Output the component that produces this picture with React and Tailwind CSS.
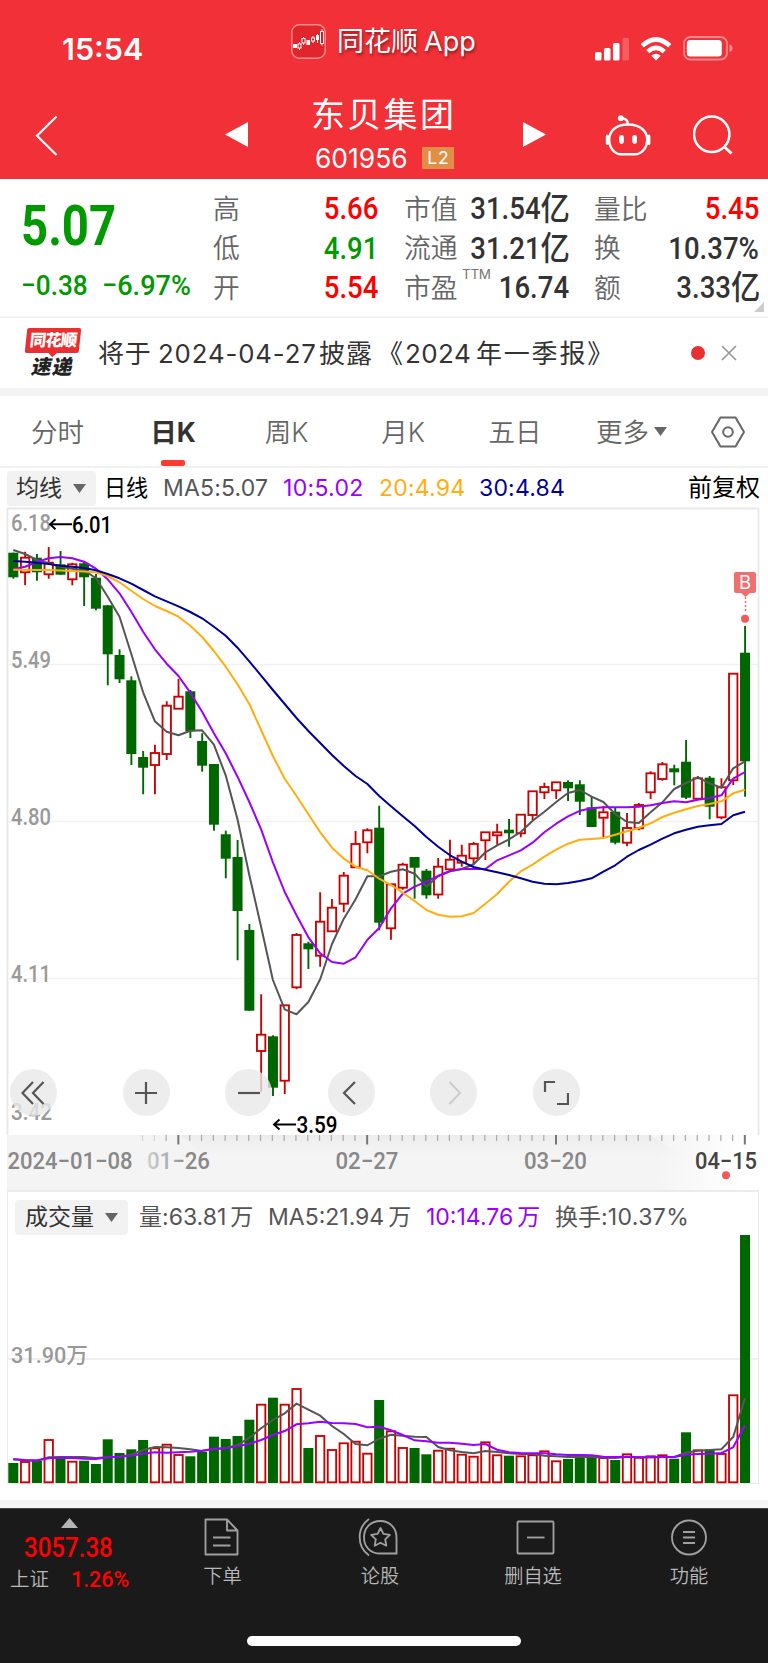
import React from "react";

const GREEN = "#006600";
const RED = "#cc0000";

// [kind, body top, body bottom, wick top, wick bottom] in page pixels
const candles = [
  ["g", 552.7, 577.3, 552.7, 578.7], ["r", 557.7, 572.3, 551.7, 585.3], ["g", 557.7, 572.3, 554, 580.7],
  ["r", 562.7, 574.3, 547, 578.7], ["g", 564.3, 574.7, 551, 574.7], ["r", 564.3, 579.3, 562.7, 585.3],
  ["g", 563.3, 577.3, 561.7, 606], ["g", 577.7, 608.7, 574, 610.3], ["g", 605.3, 654.3, 605.3, 685.3],
  ["g", 655, 679.3, 649.3, 683], ["g", 680.3, 754, 676.3, 765], ["g", 757, 767.7, 751, 794.3],
  ["r", 753, 765, 744.7, 794.3], ["r", 705.7, 754, 701.3, 760], ["r", 696.7, 708.7, 679, 708.7],
  ["g", 691.3, 731.3, 690, 738], ["g", 741, 765.7, 733.3, 771.7], ["g", 764, 824.7, 764, 830.7],
  ["g", 834.3, 858.7, 830.7, 878.3], ["g", 857, 911, 840, 960.3], ["g", 930, 1010.7, 924, 1010.7],
  ["r", 1034.7, 1051, 994.3, 1091.7], ["g", 1036.3, 1087.7, 1035.3, 1096], ["r", 1005.3, 1080.7, 1005.3, 1094],
  ["r", 935, 987.3, 933, 989.3], ["g", 943.3, 949.3, 941.7, 969], ["r", 921.7, 955.7, 892.3, 966.7],
  ["r", 907.7, 931.3, 899, 931.3], ["r", 875.7, 903.7, 872, 912.3], ["r", 844, 867.3, 831, 867.3],
  ["r", 830.3, 842.3, 828.3, 853.3], ["g", 827.7, 922.7, 805.7, 930.3], ["r", 884.3, 928.3, 884.3, 939.7],
  ["r", 864.7, 887.7, 862.7, 889.7], ["g", 857, 867.7, 857, 898.7], ["g", 870.7, 895.3, 869, 898.7],
  ["r", 866.7, 894.5, 858, 898.7], ["r", 859.7, 869.3, 839.7, 869.3], ["r", 855.7, 862.7, 844.7, 866.7],
  ["r", 844, 858.3, 842, 864.7], ["r", 832.3, 840.3, 832.3, 860], ["r", 832.3, 835.3, 823.7, 844.7],
  ["g", 829.7, 833.3, 819, 846.7], ["r", 814.7, 833.3, 814.7, 837.3], ["r", 791.3, 815, 791.3, 820],
  ["r", 787, 792.3, 782.7, 799], ["r", 782.3, 790.3, 782.3, 799], ["g", 782, 788.3, 780.3, 801],
  ["g", 784.3, 801.7, 780.3, 815], ["g", 807.3, 827, 797, 827], ["r", 812.3, 817.7, 806, 837.7],
  ["g", 811.7, 842.7, 807.7, 844.3], ["r", 828, 842.7, 813, 846.3], ["r", 805, 828.3, 803, 830.3],
  ["r", 773.3, 792.3, 771.3, 799], ["r", 764.3, 779, 762, 780.7], ["g", 768.3, 772.3, 764.7, 785.3],
  ["g", 761.7, 797.7, 740, 799], ["r", 778.3, 798.7, 776, 798.7], ["g", 777.7, 806.7, 776, 819.3],
  ["r", 787.3, 817.3, 778.3, 819.3], ["r", 673.7, 780.3, 673.7, 785], ["g", 652.7, 761.3, 626, 796.7],
];

const ma5 = [550,554,560,563.3,566.7,568.7,570.7,578,596.7,616.7,654,692.3,721.3,731.7,735.3,730.7,730.3,744.7,775.3,819.3,875,926.7,980,1009.3,1014.3,1002,979.3,944,918.7,899.3,876.3,876.3,871.7,869.3,873.7,886.7,876,871.3,869,864.3,852.3,845.3,839.3,832,820.7,811.7,802,793,790,796.7,802,814,822,823,812.3,802.3,789,783,777.3,783.3,787.7,768.3,761.3];
const ma10 = [569.3,566.7,562,558.3,557,558.3,561.7,568.7,579.3,593.3,611.7,631.7,649.3,663.7,676,692.7,711.7,733.3,753.3,776.7,802,829.3,862.3,892,915.3,937.3,953.3,962,963.7,957.3,939.7,928,908.3,893.7,886.7,881.7,876,871,869,869,869,860.3,855.3,850.3,842.7,832.3,823.7,816.3,810.8,808.3,807.3,807.3,807.3,806.7,805.3,803,801.3,802.3,799.7,798,795.3,778.7,772];
const ma20 = [569.7,569.7,570,570,570.5,571,571.6,572.3,576,582.3,590.7,599,606,611,616.7,625.7,637,651,666.7,684.3,704,730,756,778.7,796,814.3,832.3,847.7,858.7,866.7,870.3,878.7,885,892.7,901,910,914.7,916.7,916.3,913,903.7,894,881.7,871.3,864.7,856.7,849.7,843.7,839.8,839,838,834.7,831.3,828,823.3,817,812.7,809.3,806,804,801.3,793.3,789.7];
const ma30 = [561,561.7,562.7,564,565.7,566.7,568,570.3,574,578.3,583.7,590,596.3,601.3,606.3,612,618.3,626.7,635.7,647.7,661.3,675.7,690,704,718,731,743,755,766,776,784,796,806.3,816.3,826,837,846.7,855.3,861.7,867,869.7,872.3,875,878.3,881.7,883.7,884.3,883,881,878.3,871.7,865.3,856.7,850,844.7,838.7,833.3,829.7,826.7,825.3,824,815.3,811.7];

const volTop = [1463,1462,1461,1440,1458,1461.7,1460.7,1464,1439.3,1453,1449.3,1440,1448.3,1444.7,1455,1456.3,1452,1436.7,1439,1436,1419.7,1404.7,1397.7,1404.7,1389,1448,1436,1450,1443.3,1441.7,1453.7,1400,1431.3,1448,1448,1454.3,1450.7,1448.7,1454.7,1456.7,1442.3,1455.3,1455.7,1456.3,1455.3,1451.3,1461.3,1459,1457.3,1456.3,1458,1460,1454.3,1457.7,1456.3,1455.3,1458.7,1432.3,1450.3,1449.3,1454,1395.3,1235];
const vma5 = [1459.3,1460.3,1461,1457.3,1457,1457,1457,1458,1457.3,1456.7,1454.7,1450,1447,1447.3,1448,1449.3,1451,1449.3,1448,1445.3,1437.7,1428.3,1420,1413.3,1403.7,1409.7,1415.7,1426,1434,1444,1445.3,1438.7,1434.8,1435.7,1436.7,1437,1447,1450.3,1452,1453.3,1451,1452,1453.3,1454,1454,1455.7,1456.3,1457,1457,1456.7,1457.7,1458,1456.7,1457.3,1457.3,1457,1457,1452.7,1450.7,1450,1449.3,1437,1398];
const vma10 = [1459.3,1460,1460.3,1458.3,1457.7,1458,1458.7,1459,1457.3,1456.7,1455.7,1453.7,1452.3,1452.7,1452.3,1451.7,1450.7,1448.7,1448.3,1446.3,1443.7,1440,1435,1431,1424.3,1423.3,1421.7,1423,1423.3,1424,1427.3,1426.7,1430.2,1435,1440.3,1441.3,1442.7,1442.7,1443.7,1445,1444,1449.7,1452.3,1453,1453.3,1453.3,1454.3,1455,1455,1455.3,1456.7,1457,1456.7,1457.3,1457.3,1457,1457,1454.7,1454,1453.7,1453,1447.3,1425.3];

const cx = (i) => 13.3 + 11.802 * i;
const line = (ys) => ys.map((y, i) => `${cx(i).toFixed(1)},${y}`).join(" ");

function AxisText({ x, y, w, size = 23, fill = "#999", weight = 500, children }) {
  return (
    <text x={x} y={y} textLength={w} lengthAdjust="spacingAndGlyphs" fontSize={size} fill={fill} fontWeight={weight}>
      {children}
    </text>
  );
}

function Caret({ className = "" }) {
  return (
    <svg width="13" height="9" viewBox="0 0 13 9" className={className}>
      <path d="M0 0H13L6.500 9Z" fill="#666" />
    </svg>
  );
}

function StatusBar() {
  return (
    <div className="flex h-20 items-start">
      <div className="mt-[33px] ml-[62px] w-[229px] text-[30.5px] leading-[32px] font-semibold">15:54</div>
      <div className="mt-6 flex items-center">
        <svg width="35" height="35" viewBox="0 0 35 35">
          <rect x="0.8" y="0.8" width="33.4" height="33.4" rx="7.500" fill="#e0262c" stroke="#f58a8d" strokeWidth="1.500" />
          <g stroke="#fff" strokeWidth="1" fill="none">
            <path d="M8.500 18v8M12.500 13v8M22 12v7M26.500 10v9M31 5.500v16" />
            <rect x="7" y="20" width="3" height="4" fill="#d9181f" />
            <rect x="11" y="14.500" width="3" height="4.500" fill="#d9181f" />
            <rect x="20.500" y="14" width="3" height="3" fill="#d9181f" />
            <rect x="29.500" y="7.500" width="3" height="12" fill="#d9181f" />
          </g>
          <path d="M2 20h4v4H2zM15.500 16h3.500v5h-3.500zM25 11h3v5h-3z" fill="#fff" />
        </svg>
        <span className="ml-[11px] h-[34px] text-[27px] leading-[34px] [text-shadow:1px_2px_3px_rgba(0,0,0,0.45)]">
          同花顺<span className="ml-[6px] inline-block origin-left">App</span>
        </span>
      </div>
      <div className="mt-[36px] ml-auto flex items-center pr-[35px]">
        <svg width="34" height="24" viewBox="0 0 34 24" fill="#fff">
          <rect x="0" y="15" width="6.500" height="8.500" rx="1.500" />
          <rect x="9" y="11" width="6.500" height="12.500" rx="1.500" />
          <rect x="18" y="6" width="6.500" height="17.500" rx="1.500" />
          <rect x="27.500" y="0.800" width="6.500" height="22.700" rx="1.500" opacity="0.22" />
        </svg>
        <svg width="32" height="24" viewBox="0 0 32 24" className="ml-[11px]" fill="none" stroke="#fff" strokeWidth="4.600">
          <path d="M2.200 8.800Q16 -3.800 29.800 8.800" />
          <path d="M7.700 14.600Q16 7.200 24.300 14.600" />
          <path d="M16 23.500L11.300 18.700Q16 14.700 20.700 18.700Z" fill="#fff" stroke="none" />
        </svg>
        <svg width="50" height="25" viewBox="0 0 50 25" className="ml-[11px]">
          <rect x="1" y="1" width="43" height="22.500" rx="6.500" fill="none" stroke="#f7888c" strokeWidth="1.800" />
          <rect x="3.800" y="4" width="35" height="16.500" rx="3.500" fill="#fff" />
          <path d="M46.500 8.500Q49.500 9.500 49.500 12.300T46.500 16.200Z" fill="#f7888c" />
        </svg>
      </div>
    </div>
  );
}

function TitleBar() {
  return (
    <div className="flex h-[99px] items-start">
      <svg width="24" height="42" viewBox="0 0 24 42" className="mt-[35px] ml-[35px]" fill="none" stroke="#fff" strokeWidth="2.200">
        <path d="M21.500 1.500L2 20.700L21.500 40" />
      </svg>
      <svg width="23" height="25" viewBox="0 0 23 25" className="mt-[42px] ml-[166px]">
        <path d="M23 0V25L0 12.500Z" fill="#fff" />
      </svg>
      <div className="ml-[63px] flex w-[146px] flex-col">
        <div className="mt-[12px] h-[48px] text-[34px] leading-[46px] tracking-[2.300px] whitespace-nowrap">东贝集团</div>
        <div className="mt-[6px] flex h-6 items-center pl-[4px]">
          <span className="w-[97px] text-[27.500px] leading-6"><span className="inline-block origin-left scale-x-[0.96]">601956</span></span>
          <span className="ml-[10px] flex h-[22px] w-8 items-center justify-center bg-[#e18e47] pl-px text-[17.500px] leading-none tracking-[1px]">L2</span>
        </div>
      </div>
      <svg width="23" height="25" viewBox="0 0 23 25" className="mt-[42px] ml-[66px]">
        <path d="M0 0L23 12.500L0 25Z" fill="#fff" />
      </svg>
      <svg width="46" height="42" viewBox="0 0 46 42" className="mt-[35px] ml-[59px]" fill="none" stroke="#fff" strokeWidth="2.400" strokeLinecap="round">
        <path d="M23 9.500C10.500 9.500 4.200 16.500 4.200 24.500C4.200 33.500 10 39.300 16 39.300H30C36 39.300 42.200 33.500 42.200 24.500C42.200 16.500 35.500 9.500 23 9.500Z" />
        <path d="M2.400 21v7.500M43.800 21v7.500" strokeWidth="3.200" />
        <path d="M22.500 9V6.500Q21 3.500 16 3" />
        <circle cx="15.800" cy="3.200" r="2.900" fill="#fff" stroke="none" />
        <path d="M16.500 22.300v4.200M29.600 22.300v4.200" strokeWidth="4.800" />
      </svg>
      <svg width="42" height="42" viewBox="0 0 42 42" className="mt-[35px] ml-[42px]" fill="none" stroke="#fff" strokeWidth="2.500">
        <circle cx="18.700" cy="19.300" r="17.700" />
        <path d="M31 31.500L38.500 38.500" strokeWidth="3" />
      </svg>
    </div>
  );
}

function Stat({ label, value, unit, tone, note }) {
  return (
    <div className="flex h-[39.500px] items-center justify-between whitespace-nowrap">
      <span className="relative text-[26.800px] font-[350] text-[#666]">
        {label}
        {note && <span className="absolute -top-[2px] left-[58px] text-[13.500px] leading-[16px] font-normal tracking-[-0.3px] text-[#777]">{note}</span>}
      </span>
      <span className={`flex origin-right scale-x-[0.89] items-center font-[Roboto,'Noto_Sans_CJK_SC',sans-serif] text-[31px] leading-none font-medium ${tone}`}>
        {value}
        {unit && <span className="-mr-px text-[33px] font-medium">{unit}</span>}
      </span>
    </div>
  );
}

function Quote() {
  return (
    <section className="relative flex h-[139px] border-b-2 border-[#f3f3f3] pt-[10px]">
      <div className="w-[213px] pl-[21px] font-[Roboto] text-[#009900]">
        <div className="mt-[8px] h-[55px] origin-left scale-x-[0.86] text-[55px] leading-[58px] font-bold">5.07</div>
        <div className="mt-[18px] flex h-8 text-[28.500px] leading-8 font-medium whitespace-nowrap">
          <span className="w-[81px]"><span className="inline-block origin-left scale-x-[0.92]">−0.38</span></span>
          <span className="inline-block origin-left scale-x-[0.95]">−6.97%</span>
        </div>
      </div>
      <div className="w-[165px]">
        <Stat label="高" value="5.66" tone="text-[#ff0000]" />
        <Stat label="低" value="4.91" tone="text-[#009900]" />
        <Stat label="开" value="5.54" tone="text-[#ff0000]" />
      </div>
      <div className="ml-[26px] w-[165px]">
        <Stat label="市值" value="31.54" unit="亿" tone="text-[#333]" />
        <Stat label="流通" value="31.21" unit="亿" tone="text-[#333]" />
        <Stat label="市盈" value="16.74" note="TTM" tone="text-[#333]" />
      </div>
      <div className="ml-[25px] w-[165px]">
        <Stat label="量比" value="5.45" tone="text-[#ff0000]" />
        <Stat label="换" value="10.37%" tone="text-[#333]" />
        <Stat label="额" value="3.33" unit="亿" tone="text-[#333]" />
      </div>
      <svg width="10" height="10" viewBox="0 0 10 10" className="absolute right-1 bottom-1">
        <path d="M10 0V10H0Z" fill="#ccc" />
      </svg>
    </section>
  );
}

function Notice() {
  return (
    <section className="flex h-[78px] items-center border-b-8 border-[#f4f4f4] text-[26px] text-[#333]">
      <div className="-mt-[1px] ml-[24px] flex h-[50px] w-[58px] flex-col items-center">
        <div className="relative flex h-[25px] w-[54px] -skew-x-6 items-center justify-center rounded-[2px] bg-[#e93030] text-[16.500px] leading-none font-black tracking-[-1px] text-white">
          同花顺
          <span className="absolute -bottom-[3px] left-[25px] size-[6px] rotate-45 bg-[#e93030]" />
        </div>
        <div className="mt-[3px] -skew-x-12 text-[20px] leading-[22px] font-black tracking-[1px] text-[#222]">速递</div>
      </div>
      <div className="ml-[16px] flex whitespace-nowrap">
        <span className="w-[60px] tracking-[0.8px]">将于</span>
        <span className="w-[161px] font-[Inter]"><span className="inline-block origin-left scale-x-[0.99] tracking-[0.9px]">2024-04-27</span></span>
        <span className="w-[58px] tracking-[1px]">披露</span>
        <span className="w-[28px]">《</span>
        <span className="w-[71px] font-[Inter] tracking-[0.4px]">2024</span>
        <span className="tracking-[1.800px]">年一季报》</span>
      </div>
      <span className="ml-auto size-[14px] rounded-full bg-[#e93030]" />
      <svg width="16" height="16" viewBox="0 0 16 16" className="mr-[31px] ml-[16px]" stroke="#999" strokeWidth="1.700">
        <path d="M1 1L15 15M15 1L1 15" />
      </svg>
    </section>
  );
}

function Tabs() {
  const cell = "flex items-center justify-center";
  return (
    <nav className="flex h-[72px] border-b-2 border-[#f1f1f1] pt-[3px] text-[26.500px] font-[350] text-[#666]">
      <div className={`${cell} w-[115px]`}>分时</div>
      <div className={`${cell} relative w-[116px] font-bold text-[#333]`}>
        日K
        <span className="absolute bottom-0 left-[46px] h-[6px] w-6 rounded-[2px] bg-[#ff3b30]" />
      </div>
      <div className={`${cell} w-[111px]`}>周K</div>
      <div className={`${cell} w-[122px]`}>月K</div>
      <div className={`${cell} w-[102px]`}>五日</div>
      <div className={`${cell} w-[131px]`}>
        更多
        <Caret className="mb-[2px] ml-[5px]" />
      </div>
      <div className={`${cell} w-[62px]`}>
        <svg width="34" height="32" viewBox="0 0 34 32" className="mb-[2px]" fill="none" stroke="#666" strokeWidth="2">
          <path d="M9.500 1.500H24.500L33 16L24.500 30.500H9.500L1 16Z" />
          <circle cx="17" cy="16" r="4.800" />
        </svg>
      </div>
    </nav>
  );
}

function KChart() {
  return (
    <section className="relative">
      <svg width="768" height="628" viewBox="0 507 768 628" className="block overflow-visible font-[Roboto]">
        <path d="M7.500 1135V508.500H758.500V1135" fill="none" stroke="#e8e8e8" strokeWidth="1.800" />
        <path d="M8 664.500H758M8 821.500H758M8 978.500H758" stroke="#f1f1f1" strokeWidth="1.500" />
        <AxisText x="11" y="530.500" w="40">6.18</AxisText>
        <AxisText x="11" y="667.500" w="40">5.49</AxisText>
        <AxisText x="11" y="825" w="40">4.80</AxisText>
        <AxisText x="11" y="981.500" w="40">4.11</AxisText>
        <AxisText x="11" y="1119.500" w="41">3.42</AxisText>
        {candles.map(([kind, top, bottom, high, low], i) =>
          kind === "g" ? (
            <g key={i} fill={GREEN}>
              <rect x={cx(i) - 0.9} y={high} width="1.900" height={low - high} />
              <rect x={cx(i) - 5} y={top} width="10" height={bottom - top} />
            </g>
          ) : (
            <g key={i} stroke={RED} strokeWidth="1.850" fill="none">
              <path d={`M${cx(i)} ${high}V${top}M${cx(i)} ${bottom}V${low}`} />
              <rect x={cx(i) - 4.2} y={top} width="8.400" height={bottom - top} />
            </g>
          )
        )}
        <g fill="none" strokeWidth="2" strokeLinejoin="round">
          <polyline points={line(ma5)} stroke="#555" />
          <polyline points={line(ma10)} stroke="#9900ff" />
          <polyline points={line(ma20)} stroke="#ffae0d" />
          <polyline points={line(ma30)} stroke="#000099" />
        </g>
        <path d="M72 524.200H50M55.500 519.200L50 524.200L55.500 529.200" fill="none" stroke="#000" strokeWidth="1.900" />
        <AxisText x="72" y="532.500" w="40" fill="#000">6.01</AxisText>
        <path d="M296 1124.500H274M279.500 1119.500L274 1124.500L279.500 1129.500" fill="none" stroke="#000" strokeWidth="1.900" />
        <AxisText x="296.500" y="1132.500" w="41" fill="#000">3.59</AxisText>
        <rect x="734" y="572" width="22" height="21" rx="2" fill="#f07070" />
        <path d="M741 593H750L745.500 597Z" fill="#f07070" />
        <text x="745" y="589.300" textAnchor="middle" fontSize="18.500" fill="#fff" fontFamily="Inter">B</text>
        <path d="M745.500 597V613" stroke="#f07070" strokeWidth="1.500" strokeDasharray="2 2" />
        <circle cx="745" cy="618.700" r="4" fill="#f05a5a" />
      </svg>
      <div className="absolute bottom-[19px] left-[10px] flex gap-[55.500px] [&>*]:flex [&>*]:size-[47px] [&>*]:items-center [&>*]:justify-center [&>*]:rounded-full [&>*]:bg-[#e8e8e8]/80">
        <button className="mr-[10px]">
          <svg width="26" height="26" viewBox="0 0 26 26" fill="none" stroke="#555" strokeWidth="2.200"><path d="M12 2L1.500 13L12 24M22.500 2L12 13L22.500 24" /></svg>
        </button>
        <button>
          <svg width="24" height="24" viewBox="0 0 24 24" stroke="#555" strokeWidth="2.200"><path d="M1 12H23M12 1V23" /></svg>
        </button>
        <button>
          <svg width="24" height="24" viewBox="0 0 24 24" stroke="#555" strokeWidth="2.200"><path d="M1 12H23" /></svg>
        </button>
        <button>
          <svg width="26" height="26" viewBox="0 0 26 26" fill="none" stroke="#555" strokeWidth="2.200"><path d="M17 2L6 13L17 24" /></svg>
        </button>
        <button>
          <svg width="26" height="26" viewBox="0 0 26 26" fill="none" stroke="#ccc" strokeWidth="2"><path d="M8.500 2L19 13L8.500 24" /></svg>
        </button>
        <button>
          <svg width="26" height="26" viewBox="0 0 26 26" fill="none" stroke="#555" strokeWidth="2.200"><path d="M2 12V2H12M25 13V24H14" /></svg>
        </button>
      </div>
    </section>
  );
}

function DateAxis() {
  return (
    <section className="mr-[9px] ml-[7px] h-[55px] rounded-tr-lg bg-[linear-gradient(100deg,#f4f4f4_0%,#f4f4f4_86%,#ffffff_98%)]">
      <svg width="752" height="55" viewBox="7 0 752 55" className="block font-[Roboto]">
        <defs>
          <linearGradient id="shade" x1="0" y1="0" x2="0" y2="1">
            <stop offset="0" stopColor="#e9e9e9" />
            <stop offset="1" stopColor="#f4f4f4" stopOpacity="0" />
          </linearGradient>
          <linearGradient id="fade">
            <stop offset="0" stopColor="#d0d0d0" />
            <stop offset="0.700" stopColor="#888" />
          </linearGradient>
        </defs>
        <path d="M180 0H650L690 26H210Z" fill="url(#shade)" opacity="0.7" />
        {Array.from({ length: 52 }, (_, k) => k + 11).map((i) => {
          const major = i === 14 || i === 30 || i === 46 || i === 62;
          return (
            <rect key={i} x={cx(i) - 1.2} y="0" width={major ? 2 : 1.2} height={major ? 9.5 : 6} fill={major ? "#777" : i < 13 ? "#d5d5d5" : "#aaa"} />
          );
        })}
        <AxisText x="7.500" y="34" w="125" fill="#888">2024−01−08</AxisText>
        <AxisText x="147" y="34" w="63" fill="url(#fade)">01−26</AxisText>
        <AxisText x="335.500" y="34" w="63" fill="#888">02−27</AxisText>
        <AxisText x="524" y="34" w="63" fill="#888">03−20</AxisText>
        <AxisText x="695" y="34" w="62" fill="#444">04−15</AxisText>
        <circle cx="726" cy="40.300" r="4" fill="#f05a5a" />
      </svg>
    </section>
  );
}

function Picker({ children, className }) {
  return (
    <div className={`flex h-[35px] items-center rounded-[4px] bg-[#f2f2f2] pl-[10px] text-[#333] ${className}`}>
      {children}
      <Caret className="ml-[11px]" />
    </div>
  );
}

function VolumeChart() {
  return (
    <section className="mr-[9px] ml-[7px] border-x-[1.5px] border-t-2 border-[#ebebeb]">
      <div className="flex h-[43px] items-center pt-[7px] pl-[7px] text-[23px] whitespace-nowrap text-[#555]">
        <Picker className="w-[113px]">成交量</Picker>
        <span className="ml-[11px] w-[129px]">量:<span className="font-[Inter]">63.81</span><span className="ml-1">万</span></span>
        <span className="w-[158px]"><span className="font-[Inter]">MA5:21.94</span><span className="ml-1">万</span></span>
        <span className="w-[129px] text-[#9900ff]"><span className="font-[Inter]">10:14.76</span><span className="ml-1">万</span></span>
        <span>换手:<span className="font-[Inter] tracking-[0.4px]">10.37%</span></span>
      </div>
      <svg width="750" height="249" viewBox="8 1235 750 249" className="block font-[Roboto]">
        <path d="M8 1483.500H758M8 1359H758" fill="none" stroke="#ebebeb" strokeWidth="1.500" />
        <text x="11" y="1362.500" fontSize="22" textLength="77" lengthAdjust="spacingAndGlyphs" fill="#999" fontWeight="500" fontFamily="Roboto, 'Noto Sans CJK SC', sans-serif">31.90万</text>
        {candles.map(([kind], i) =>
          kind === "g" ? (
            <rect key={i} x={cx(i) - 5} y={volTop[i]} width="10" height={1483 - volTop[i]} fill={GREEN} />
          ) : (
            <rect key={i} x={cx(i) - 4.2} y={volTop[i]} width="8.400" height={1482.3 - volTop[i]} fill="#fff" stroke={RED} strokeWidth="1.850" />
          )
        )}
        <g fill="none" strokeWidth="2">
          <polyline points={line(vma5)} stroke="#555" />
          <polyline points={line(vma10)} stroke="#9900ff" />
        </g>
      </svg>
    </section>
  );
}

function NavItem({ label, className, children }) {
  return (
    <div className={`flex flex-col items-center ${className}`}>
      <svg width="44" height="42" viewBox="0 0 44 42" className="mt-[7px]" fill="none" stroke="#a0a0a0" strokeWidth="1.850">
        {children}
      </svg>
      <span className="mt-[6px] h-6 text-[19.200px] leading-6 font-[350] text-[#b8b8b8]">{label}</span>
    </div>
  );
}

function BottomBar() {
  return (
    <footer className="flex h-[155px] flex-col items-center border-t border-[#444] bg-[#1a1a1a]">
      <div className="flex h-[127px] w-full">
        <div className="w-[140px]">
          <svg width="17" height="10" viewBox="0 0 17 10" className="mt-[9px] ml-[61px]"><path d="M8.500 0L17 10H0Z" fill="#b5b5b5" /></svg>
          <div className="mt-[6px] ml-[24px] h-[28px] w-fit origin-left scale-x-[0.875] font-[Roboto] text-[27.500px] leading-[28px] font-medium text-[#ff0000]">3057.38</div>
          <div className="mt-[5px] flex h-6 pl-[10px] leading-6">
            <span className="w-[61px] text-[19.500px] font-[350] text-[#b8b8b8]">上证</span>
            <span className="origin-left scale-x-[0.95] font-[Roboto] text-[22.500px] font-medium text-[#ff0000]">1.26%</span>
          </div>
        </div>
        <NavItem label="下单" className="w-[165px]">
          <path d="M4.500 3.500H26L36.500 14.500V38.500H4.500ZM26 3.500V14.500H36.500M12 21.500H29.500M12 29.500H29.500" strokeLinejoin="round" />
        </NavItem>
        <NavItem label="论股" className="w-[150px]">
          <path d="M11 3A22.500 22.500 0 0 0 11 39.500M22.500 5C12.500 5 6 12 6 21.500C6 31 12.500 37.500 22.500 37.500H38.500V21.500C38.500 12 31.500 5 22.500 5Z" />
          <path d="M22.500 12L25.400 17.900L31.800 18.800L27.200 23.300L28.300 29.700L22.500 26.700L16.700 29.700L17.800 23.300L13.200 18.800L19.600 17.900Z" strokeLinejoin="round" />
        </NavItem>
        <NavItem label="删自选" className="w-[156px]">
          <rect x="6.500" y="5.500" width="36" height="32" rx="1" />
          <path d="M16 21.500H33.500" />
        </NavItem>
        <NavItem label="功能" className="w-[156px]">
          <circle cx="22" cy="21.500" r="17" />
          <path d="M16 16H28M16 21.500H28M16 27H28" />
        </NavItem>
      </div>
      <div className="h-[10px] w-[274px] rounded-full bg-white" />
    </footer>
  );
}

export default function App() {
  return (
    <main className="w-[768px] bg-white font-[Inter,'Noto_Sans_CJK_SC',sans-serif]" lang="zh-CN">
      <header className="bg-[#f23037] text-white">
        <StatusBar />
        <TitleBar />
      </header>
      <Quote />
      <Notice />
      <Tabs />
      <div className="flex h-[39px] items-center pt-px pr-[8px] pl-[7px] text-[23px] whitespace-nowrap text-black">
        <Picker className="w-[89px] pl-[9px]!">均线</Picker>
        <span className="ml-[8px] w-[59px]"><span className="inline-block origin-left scale-x-[0.96]">日线</span></span>
        <span className="w-[120px] tracking-[0.2px] text-[#555]">MA5:5.07</span>
        <span className="w-[96px] tracking-[0.3px] text-[#9900ff]">10:5.02</span>
        <span className="w-[100px] tracking-[0.2px] text-[#ffae0d]">20:4.94</span>
        <span className="tracking-[0.2px] text-[#000099]">30:4.84</span>
        <span className="ml-auto text-[24px]">前复权</span>
      </div>
      <KChart />
      <DateAxis />
      <VolumeChart />
      <div className="mt-4 h-2 bg-[#f4f4f4]" />
      <BottomBar />
    </main>
  );
}
